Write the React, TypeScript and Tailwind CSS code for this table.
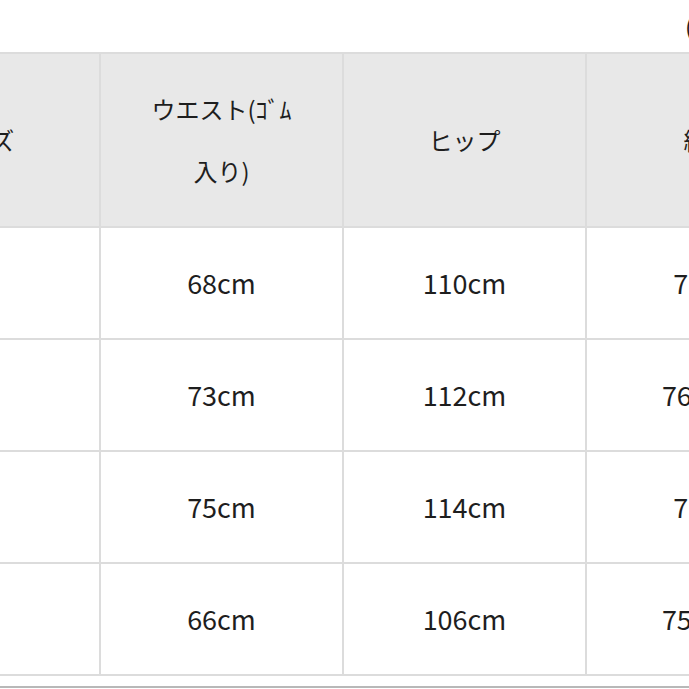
import React from "react";

const headers = ["サイズ", "ウエスト(ｺﾞﾑ\n入り)", "ヒップ", "総丈"];

const rows = [
  ["S", "68cm", "110cm", "71cm"],
  ["M", "73cm", "112cm", "76.5cm"],
  ["L", "75cm", "114cm", "71cm"],
  ["LL", "66cm", "106cm", "75.5cm"],
];

export default function App() {
  return (
    <div
      className="w-[689px] h-[689px] overflow-hidden bg-white text-[#1e1e1e]"
      style={{ fontFamily: '"Noto Sans CJK JP", "Noto Sans", sans-serif' }}
    >
      <div className="ml-[-142px] w-[972px]">
        <div className="h-[52px] pl-[827px] pt-[10px] text-[24px] leading-[32px]">
          (単位:cm)
        </div>
        <div className="grid grid-cols-4 border-t-2 border-[#dcdcdc]">
          {headers.map((h) => (
            <div
              key={h}
              className="h-[174px] flex items-center justify-center bg-[#e8e8e8] border-r-2 border-b-2 border-[#dcdcdc] text-[24px] leading-[62px] text-center whitespace-pre-line"
            >
              {h}
            </div>
          ))}
          {rows.map((r) =>
            r.map((c, i) => (
              <div
                key={r[0] + i}
                className="h-[112px] flex items-center justify-center bg-white border-r-2 border-b-2 border-[#dcdcdc] text-[27px]"
              >
                {c}
              </div>
            ))
          )}
        </div>
      </div>
      <div className="mt-[10px] h-[2px] bg-[#b8b8b8]" />
    </div>
  );
}
